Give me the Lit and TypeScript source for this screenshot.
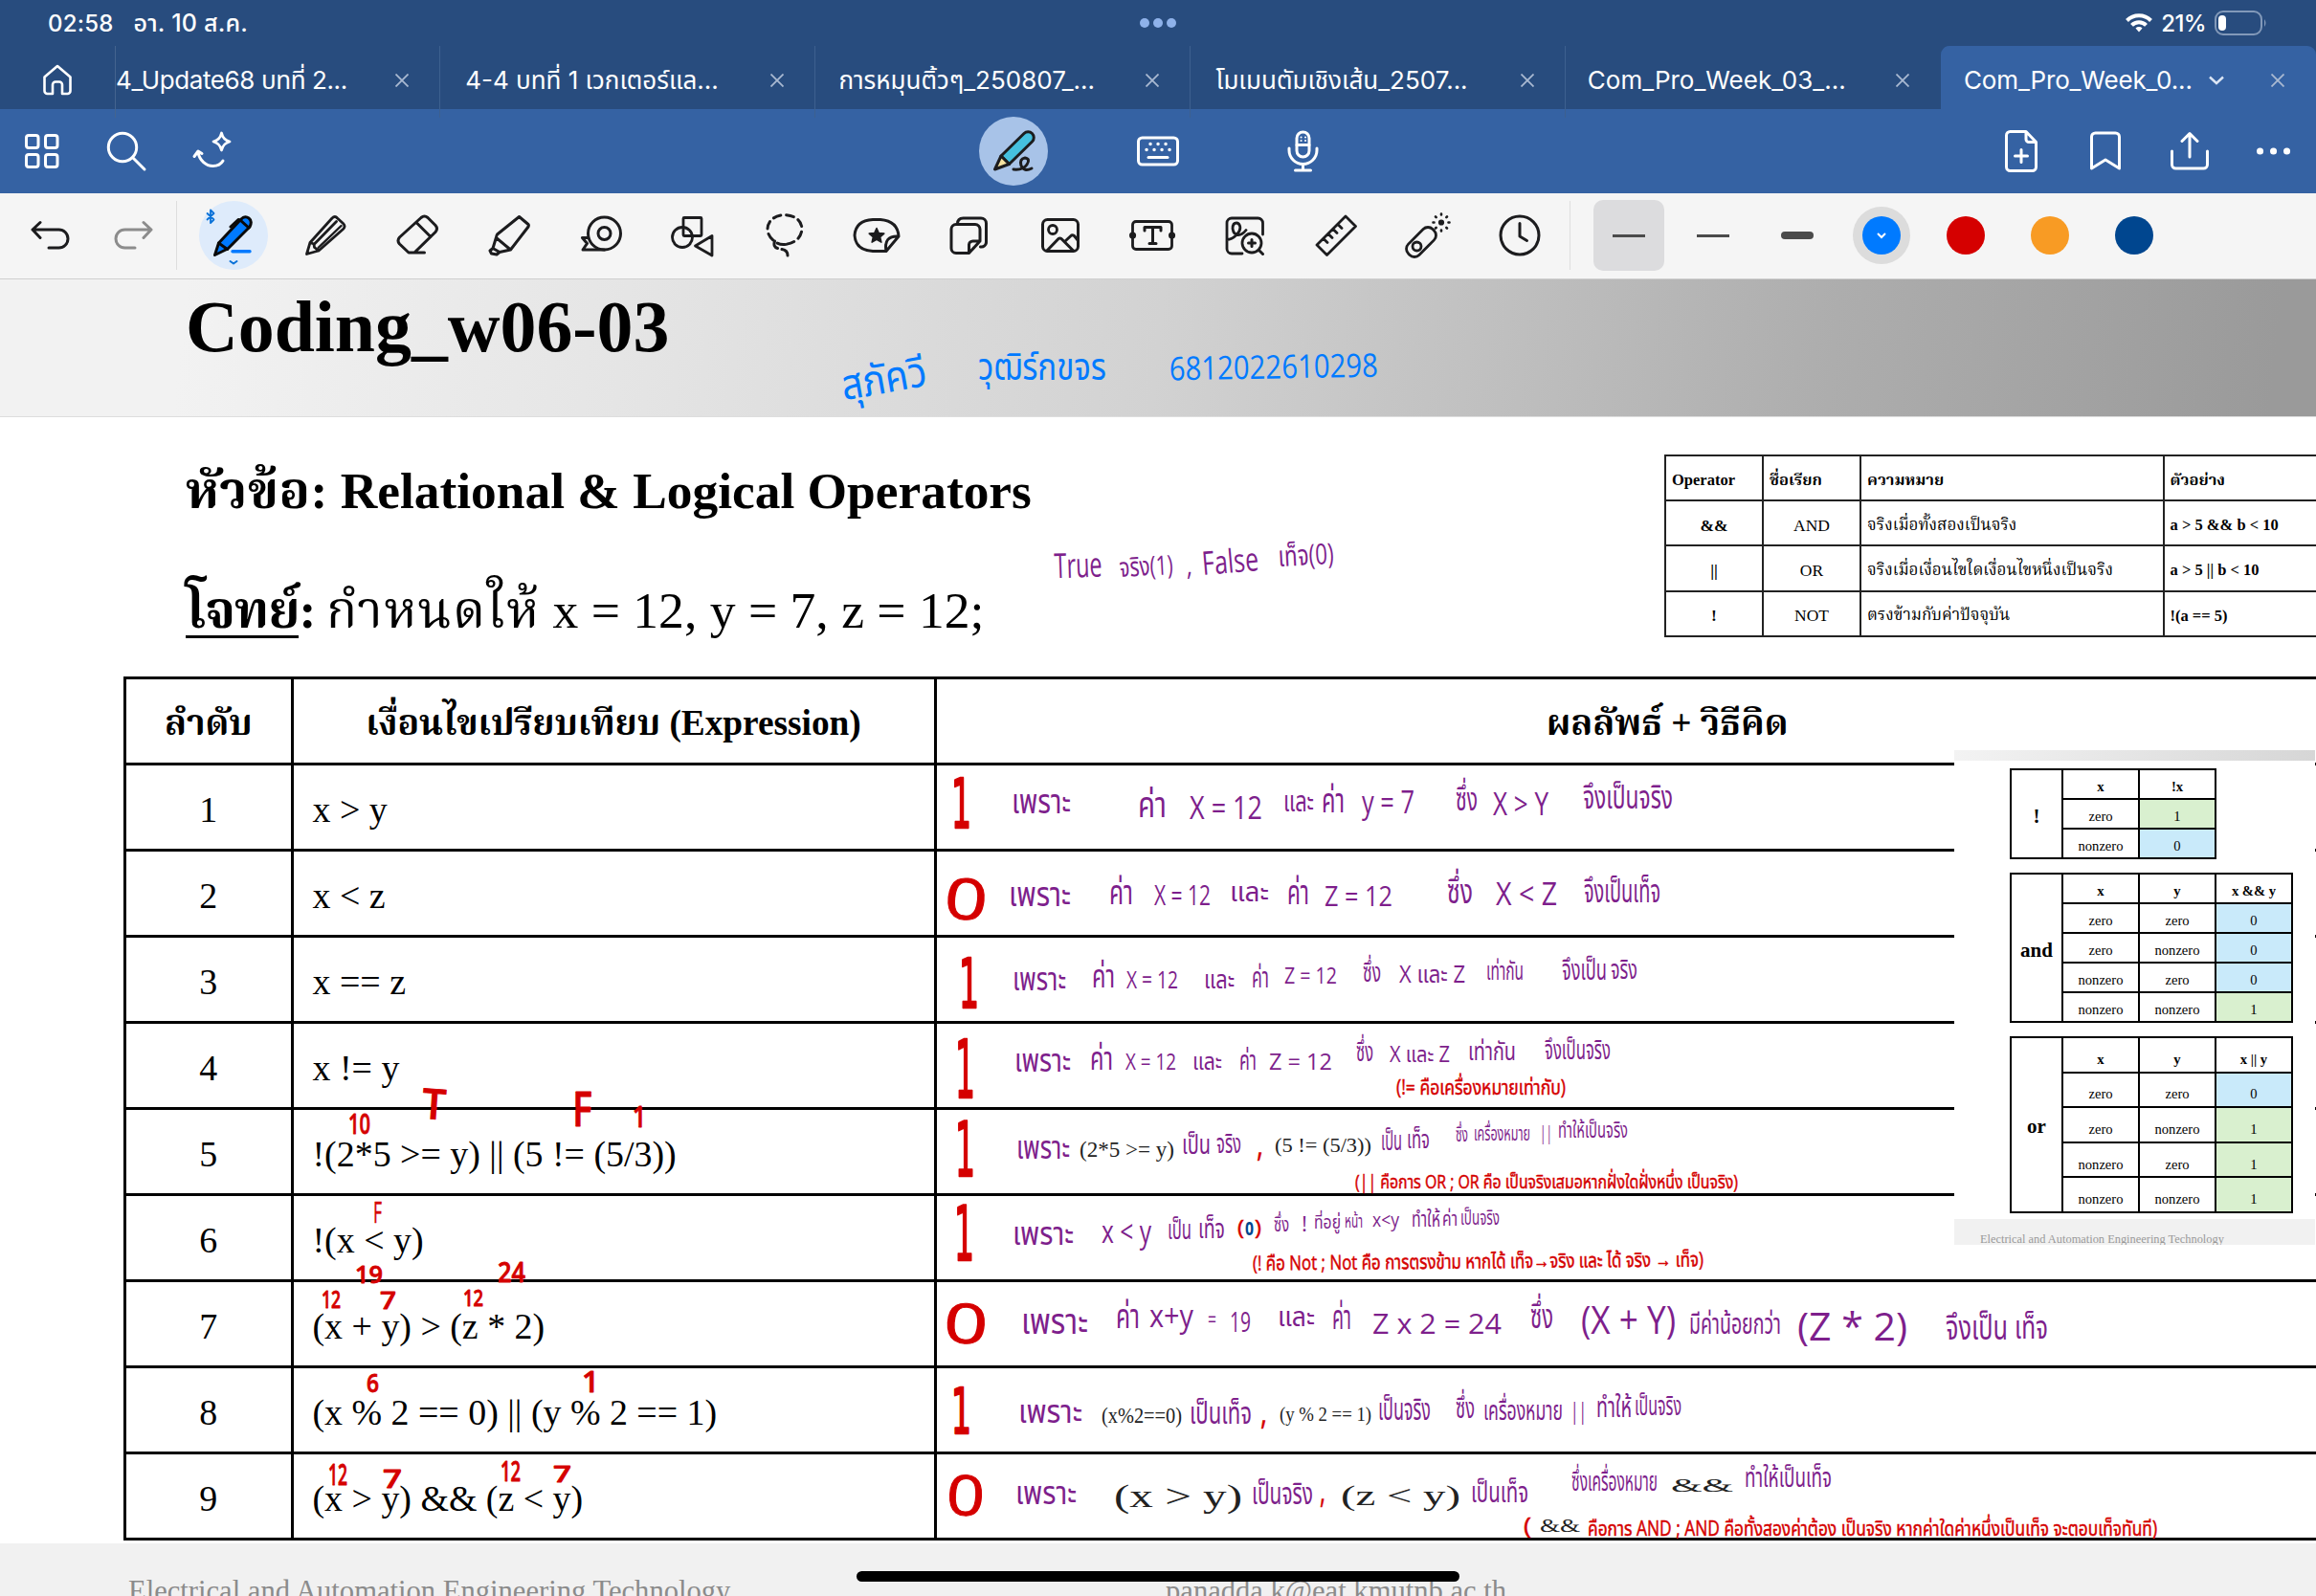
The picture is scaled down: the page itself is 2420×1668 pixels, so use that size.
import { LitElement, html, css, svg, nothing } from "lit";
import { customElement, property } from "lit/decorators.js";

const stroke = (d: string, w = 3) => svg`<path d=${d} stroke-width=${w}></path>`;

const ICONS: Record<string, unknown> = {
  home: svg`<path d="M16.5 26.5 30 15l13.5 11.5V41a3 3 0 0 1-3 3H35V34.500a3 3 0 0 0-3-3h-4a3 3 0 0 0-3 3V44h-5.500a3 3 0 0 1-3-3Z" stroke-width="2.600"></path>`,
  grid: svg`<g stroke-width="3"><rect x="13.500" y="13.500" width="12.500" height="13" rx="2.500"></rect><rect x="33.500" y="13.500" width="12.500" height="13" rx="2.500"></rect><rect x="13.500" y="33.500" width="12.500" height="13" rx="2.500"></rect><rect x="33.500" y="33.500" width="12.500" height="13" rx="2.500"></rect></g>`,
  search: svg`<circle cx="26" cy="26" r="14.700" stroke-width="3"></circle>${stroke("M37 37 49 49")}`,
  magic: svg`<path d="M39.500 11q1.500 7 8.500 9-7 2-8.500 9-1.500-7-8.500-9 7-2 8.500-9Z" stroke-width="2.800"></path>${stroke("M11 35.500l4-5.500 4 2.500M15 31C16.500 40 23.500 45.500 30.500 45.500c5 0 8.500-2 10.500-5.500")}`,
  write: svg`<path d="M17 35 41 11.500a6 6 0 0 1 8.500 8.500L25.500 43.500Z" fill="#45c0df" stroke="#1c1c1e" stroke-width="3"></path><path d="M17 35 10.500 49 25.500 43.500Z" fill="#f6e3a1" stroke="#1c1c1e" stroke-width="3"></path><path d="M30 49q10 1 14-5t-2-7q-6 1-4 8 3 7 11 3" stroke="#1c1c1e" stroke-width="3"></path>`,
  keyboard: svg`<rect x="9.500" y="16" width="41" height="28" rx="4" stroke-width="3"></rect>${stroke("M20 36.500h20", 3)}<path d="M22 22.500h.1M30 22.500h.1M38 22.500h.1M18 28.500h.1M26 28.500h.1M34 28.500h.1M42 28.500h.1" stroke-width="3.400"></path>`,
  mic: svg`<rect x="24" y="10" width="13" height="26" rx="6.500" stroke-width="3"></rect>${stroke("M16 27v2a14.500 14.500 0 0 0 29 0v-2M30.500 43.500v6M22.500 50h16M24 23.500h13")}<path d="M28.500 15.500h.1M33 15.500h.1M28.500 19h.1M33 19h.1" stroke-width="2"></path>`,
  addpage: svg`<path d="M35 9.500H18.500a4 4 0 0 0-4 4v33a4 4 0 0 0 4 4h23a4 4 0 0 0 4-4V20.500ZM35 9.500v8a3 3 0 0 0 3 3h7.500M30 28.500v13M23.500 35h13" stroke-width="3"></path>`,
  bookmark: svg`<path d="M15.500 48V15a4 4 0 0 1 4-4h21a4 4 0 0 1 4 4v33L30 39Z" stroke-width="3"></path>`,
  share: svg`<path d="M30 36V12M22 19.500l8-8 8 8M11.500 30v14a4 4 0 0 0 4 4h29a4 4 0 0 0 4-4V30" stroke-width="3"></path>`,
  more: svg`<path d="M15.500 30h.1M29.500 30h.1M43.500 30h.1" stroke-width="7"></path>`,
  undo: svg`<path d="M20 16.500 12 24l8 8.500M12 24h27.500a9.500 9.500 0 0 1 0 19H29" stroke-width="3"></path>`,
  redo: svg`<path d="M40 16.500 48 24l-8 8.500M48 24H20.500a9.500 9.500 0 0 0 0 19H31" stroke-width="3" stroke="#8c8c8c"></path>`,
  pen: svg`<circle cx="30" cy="30" r="36" fill="#deebfb" stroke="none"></circle>
    <path d="M10.500 50.500 14.500 38 38 13q4-4 8-1t1 9L24 44Z" fill="#007aff" stroke="#0a0a0a" stroke-width="3"></path>
    <path d="M14.500 38l9 6.500M37 14l9 8M27 21l8-7.500 3 1" stroke="#0a0a0a" stroke-width="3"></path>
    <path d="M29 46.800h18" stroke="#007aff" stroke-width="3.400"></path><path d="M26.500 57l3.500 2.500 3.500-2.500" stroke="#0a72d8" stroke-width="2"></path>
    <path d="M2.500 7l7 6.500L6 17V3.500L9.500 7l-7 6.500" stroke="#0a72d8" stroke-width="1.800"></path>`,
  pencil: svg`<path d="M10.500 49.500 14 37.500 37 12q3-3 5.500 0l6 5.500q3 3 0 6L23 46ZM14 37.500l4 1.500.5 3.500 4.500 3.500M19 38.500 41.500 15.500" stroke-width="2.800"></path><path d="M22.500 43 46.500 20" stroke-width="2.400"></path>`,
  eraser: svg`<path d="M37.500 48H21L11.500 39q-3-3.500 0-7L34 11.500q3.500-3 7 0l8 8q3 3.500 0 7L27 48M29 16.500l15 15" stroke-width="3"></path>`,
  marker: svg`<path d="M40.500 10.500 50 18.500q.8 1 0 2.500L31.500 45 16.500 32.500q0-2 1-3.500ZM16.500 32 13 43.500l-3 2.500 1.500 3 5.500 1 3-2.500L31.500 45M13 43.500l7 4" stroke-width="3"></path>`,
  tape: svg`<circle cx="33.500" cy="28" r="17" stroke-width="3"></circle><circle cx="33.500" cy="28" r="6.500" stroke-width="3"></circle><path d="M33.500 45H11l4.500-6.500L10.500 32.500h6" stroke-width="3"></path>`,
  shapes: svg`<rect x="20" y="11.500" width="19" height="19" rx="1" stroke-width="2.800"></rect><circle cx="19" cy="32" r="10.500" stroke-width="2.800"></circle><path d="M32.500 41 50 30.500v20.500Z" stroke-width="2.800"></path>`,
  lasso: svg`<path d="M30 39.500q-4 .5-8-1.500-10-6-10-15 1-13 18-14.500 17 1.500 18 14.500-1 14-18 16.500" stroke-width="3" stroke-dasharray="8 5.500"></path><path d="M19.500 36q-2 6 3 7.500M27 44.500q6 1 6 6.500" stroke-width="3"></path>`,
  sticker: svg`<path d="M40 46.500H26q-18-1-19-16.500 1-15.500 19-16.500h8Q52 15 53 31ZM53 31Q37 30 40 46.500" stroke-width="3"></path><path d="M30 22.500l2.300 5 5.500.6-4.100 3.700 1.200 5.400-4.900-2.800-4.900 2.800 1.200-5.400-4.100-3.700 5.500-.6Z" fill="#1c1c1e" stroke-width="1.500"></path>`,
  pages: svg`<path d="M29 48.500H17a5 5 0 0 1-5-5v-20a5 5 0 0 1 5-5h20a5 5 0 0 1 5 5V36L30.500 48.500V40a4 4 0 0 1 4-4H42M18.500 18q0-6 6-6H43a5.500 5.500 0 0 1 5.500 5.500V37a5 5 0 0 1-6 5" stroke-width="3"></path>`,
  image: svg`<rect x="11.500" y="13.500" width="37" height="33" rx="5" stroke-width="3"></rect><circle cx="22" cy="24" r="4.500" stroke-width="2.800"></circle><path d="M16 46l12-12.500q1.500-1 3 0L43.500 46M34.500 36.500l7-6.500q1.500-.5 3 .5l4 5" stroke-width="3"></path>`,
  textbox: svg`<rect x="9.500" y="15.500" width="41" height="29" rx="3.500" stroke-width="2.800"></rect><path d="M9.500 30h.1M50.500 30h.1" stroke-width="7"></path><path d="M22 25v-3.500h17V25M30.500 21.500v17M27 38.500h7" stroke-width="3"></path>`,
  aizoom: svg`<path d="M49.500 29V17a5 5 0 0 0-5-5H17a5 5 0 0 0-5 5v27a5 5 0 0 0 5 5h11M12 34.500q5 0 10-5 5-5 3.500-9.500-1-3-3.500-3-4 0-4 6 1 6.500 6 6.500 4 0 8-5" stroke-width="2.800"></path><circle cx="38" cy="38" r="10" fill="#f5f5f5" stroke-width="2.800"></circle><path d="M45.500 45.500l4 4M34.500 38h7M38 34.500v7" stroke-width="3"></path>`,
  ruler: svg`<path d="M10 40 40 10 50.500 20.500 20.500 50.500ZM17 33.500l4 4M22 28.500l4 4M27 23.500l4 4M32 18.500l4 4" stroke-width="2.800"></path>`,
  laser: svg`<rect x="5" y="29" width="36" height="16" rx="7" transform="rotate(-45 23 37)" stroke-width="2.800"></rect><circle cx="18.500" cy="41.500" r="4.500" stroke-width="2.800"></circle><path d="M44 7.500v1M44 24.500v1M35.500 16.500h1M51.500 16.500h1M38 10.500l.7.700M49.300 21.800l.7.700M38 22.500l.7-.7M49.300 11.200l.7-.7" stroke-width="2.600"></path><circle cx="44" cy="16.500" r="2.300" fill="#1c1c1e" stroke-width="1.600"></circle>`,
  clock: svg`<circle cx="30" cy="30" r="20" stroke-width="3"></circle>${stroke("M30 17.500V31l7.500 4.500")}`,
};

@customElement("ink-icon")
class InkIcon extends LitElement {
  @property() name = "";
  static styles = css`
    :host { display: block; width: 72px; height: 72px; flex: none; }
    svg { display: block; width: 72px; height: 72px; overflow: visible; fill: none; stroke: currentColor; stroke-linecap: round; stroke-linejoin: round; }
  `;
  render() {
    return html`<svg viewBox="-6 -6 72 72">${ICONS[this.name] ?? nothing}</svg>`;
  }
}

const TABS = ["4_Update68 บทที่ 2...", "4-4 บทที่ 1 เวกเตอร์แล...", "การหมุนติ้วๆ_250807_...", "โมเมนตัมเชิงเส้น_2507...", "Com_Pro_Week_03_...", "Com_Pro_Week_0..."];
const TOOLS = ["pen", "pencil", "eraser", "marker", "tape", "shapes", "lasso", "sticker", "pages", "image", "textbox", "aizoom", "ruler", "laser", "clock"];

@customElement("app-chrome")
class AppChrome extends LitElement {
  static styles = css`
    :host { display: block; font-family: Inter, "Noto Sans Thai", "Noto Sans", sans-serif; color: #fff; }
    .status { height: 48px; background: #284c7e; display: grid; grid-template-columns: 1fr auto 1fr; align-items: center; padding: 0 51px 0 50px; font-size: 24px; font-weight: 500; }
    .when { display: flex; align-items: center; gap: 21px; letter-spacing: 0.2px; }
    .when span:last-child { font-size: 25px; line-height: 28px; }
    .dots { display: flex; gap: 4px; padding-left: 1px; }
    .dots i { width: 10px; height: 10px; border-radius: 5px; background: #8fb2ea; }
    .power { display: flex; justify-content: flex-end; align-items: center; gap: 9px; letter-spacing: -0.6px; }
    .power svg { display: block; }
    .tabs { height: 66px; background: #284c7e; display: grid; grid-template-columns: 120px 340px 392px 391.500px 392px 392.500px 392px; }
    .home { display: grid; place-items: center; padding-bottom: 3px; }
    .tab { display: grid; grid-template-columns: 1fr 78px; align-items: center; border-right: 1px solid #3d608f; font-size: 26px; box-sizing: border-box; white-space: nowrap; padding-bottom: 4px; }
    .tab:nth-child(2) { border-left: 1px solid #44648f; }
    .tab:nth-child(6) { border-right: 0; grid-template-columns: 1fr 80px; }
    .label { text-align: center; overflow: visible; letter-spacing: 0; padding-left: 4px; line-height: 40px; }
    .tab:nth-child(2) .label { text-align: left; padding-left: 0; letter-spacing: -0.4px; }
    .tab.on { background: #3562a3; border-radius: 9px 9px 0 0; border: 0; grid-template-columns: 264px 48px 80px; }
    .tab.on .label { padding-left: 24px; text-align: left; letter-spacing: -0.15px; }
    .x { justify-self: center; stroke: #a9b9d1; stroke-width: 1.800; fill: none; }
    .v { justify-self: center; stroke: #dbe5f4; stroke-width: 2.400; fill: none; }
    .nav { height: 88px; background: #3562a3; display: grid; grid-template-columns: 1fr auto 1fr; align-items: center; }
    .left { display: flex; gap: 16px; padding-left: 8px; }
    .left ink-icon:nth-child(3) { margin-left: 2px; }
    .mid { display: flex; gap: 79px; }
    .disc { background: #a8c3e8; border-radius: 50%; }
    .right { display: flex; gap: 16px; justify-content: flex-end; padding-right: 8px; }
    .tools { height: 89.500px; box-sizing: border-box; background: #f5f5f5; color: #1c1c1e; display: flex; align-items: center; border-bottom: 1.500px solid #cfcfcf; padding-left: 16px; }
    .undo { display: flex; gap: 16px; width: 168px; height: 72px; border-right: 1.500px solid #dedede; }
    .set { display: flex; gap: 24px; padding-left: 23px; width: 1432px; height: 72px; box-sizing: content-box; border-right: 1.500px solid #dedede; }
    .opts { display: flex; padding-left: 17px; }
    .opt { width: 88px; height: 74px; display: grid; place-items: center; }
    .pick { width: 74px; height: 74px; border-radius: 10px; background: #dcdcde; display: grid; place-items: center; }
    .line { width: 34px; height: 2.500px; background: #4b4b4b; }
    .line.bold { height: 8px; border-radius: 4px; }
    .swatch { width: 40px; height: 40px; border-radius: 50%; display: grid; place-items: center; }
    .ring { width: 60px; height: 60px; border-radius: 50%; background: #dcdcdc; display: grid; place-items: center; }
    .blue { background: #007aff; } .red { background: #d50000; } .orange { background: #f89b24; } .navy { background: #00468f; }
  `;
  render() {
    const x = html`<svg class="x" width="14" height="14" viewBox="0 0 14 14"><path d="M.5.5l13 13M13.500.5l-13 13"></path></svg>`;
    return html`
      <div class="status">
        <div class="when"><span>02:58</span><span>อา. 10 ส.ค.</span></div>
        <div class="dots"><i></i><i></i><i></i></div>
        <div class="power">
          <svg width="28" height="20" viewBox="0 0 28 20" fill="none" stroke="#fff" stroke-width="4"><path d="M1.500 7.500a17.500 17.500 0 0 1 25 0M6.500 12.300a10.500 10.500 0 0 1 15 0"></path><path d="M14 19.500l-3.500-4a5 5 0 0 1 7 0Z" fill="#fff" stroke="none"></path></svg>
          <span>21%</span>
          <svg width="55" height="26" viewBox="0 0 55 26" fill="none"><rect x="1" y="1" width="48" height="24" rx="8" stroke="#8299b9" stroke-width="2"></rect><rect x="4" y="5" width="8" height="16" rx="4" fill="#fff"></rect><path d="M52 9q3 4 0 8Z" fill="#8299b9"></path></svg>
        </div>
      </div>
      <div class="tabs">
        <div class="home"><ink-icon name="home"></ink-icon></div>
        ${TABS.map((t, i) => html`<div class="tab ${i === 5 ? "on" : ""}"><span class="label">${t}</span>
          ${i === 5 ? html`<svg class="v" width="16" height="10" viewBox="0 0 16 10"><path d="M1 1.500l7 6.500 7-6.500"></path></svg>` : nothing}${x}</div>`)}
      </div>
      <div class="nav">
        <div class="left">${["grid", "search", "magic"].map((n) => html`<ink-icon name=${n}></ink-icon>`)}</div>
        <div class="mid"><ink-icon class="disc" name="write"></ink-icon><ink-icon name="keyboard"></ink-icon><ink-icon name="mic"></ink-icon></div>
        <div class="right">${["addpage", "bookmark", "share", "more"].map((n) => html`<ink-icon name=${n}></ink-icon>`)}</div>
      </div>
      <div class="tools">
        <div class="undo"><ink-icon name="undo"></ink-icon><ink-icon name="redo"></ink-icon></div>
        <div class="set">${TOOLS.map((n) => html`<ink-icon name=${n}></ink-icon>`)}</div>
        <div class="opts">
          <div class="opt"><div class="pick"><div class="line"></div></div></div>
          <div class="opt"><div class="line"></div></div>
          <div class="opt"><div class="line bold"></div></div>
          <div class="opt"><div class="ring"><div class="swatch blue"><svg width="10" height="7" viewBox="0 0 10 7" fill="none" stroke="#fff" stroke-width="2"><path d="M1 1l4 4 4-4"></path></svg></div></div></div>
          <div class="opt"><div class="swatch red"></div></div>
          <div class="opt"><div class="swatch orange"></div></div>
          <div class="opt"><div class="swatch navy"></div></div>
        </div>
      </div>`;
  }
}

const ROWS = ["x > y", "x < z", "x == z", "x != y", "!(2*5 >= y) || (5 != (5/3))", "!(x < y)", "(x + y) > (z * 2)", "(x % 2 == 0) || (y % 2 == 1)", "(x > y) && (z < y)"];
const OPS = [["&&", "AND", "จริงเมื่อทั้งสองเป็นจริง", "a > 5 && b < 10"], ["||", "OR", "จริงเมื่อเงื่อนไขใดเงื่อนไขหนึ่งเป็นจริง", "a > 5 || b < 10"], ["!", "NOT", "ตรงข้ามกับค่าปัจจุบัน", "!(a == 5)"]];
const TRUTH = [
  { op: "!", kind: "not", head: ["x", "!x"], rows: [["zero", "1"], ["nonzero", "0"]] },
  { op: "and", kind: "and", head: ["x", "y", "x && y"], rows: [["zero", "zero", "0"], ["zero", "nonzero", "0"], ["nonzero", "zero", "0"], ["nonzero", "nonzero", "1"]] },
  { op: "or", kind: "or", head: ["x", "y", "x || y"], rows: [["zero", "zero", "0"], ["zero", "nonzero", "1"], ["nonzero", "zero", "1"], ["nonzero", "nonzero", "1"]] },
];

/* Ink pieces on the free canvas: text, left, right, baseline, size, tilt in degrees */
type Ink = [string, number, number, number, number, number?];
const PURPLE: Ink[] = [
  ["True", 1102, 1152, 603, 36, -2], ["จริง(1)", 1170, 1226, 601, 28, -3], [",", 1240, 1246, 600, 30], ["False", 1257, 1316, 598, 34, -5], ["เท็จ(0)", 1336, 1394, 590, 30, -3],
  ["เพราะ", 1057, 1119, 849, 36], ["ค่า", 1189, 1219, 853, 38], ["X = 12", 1243, 1319, 855, 33], ["และ", 1341, 1373, 847, 30], ["ค่า", 1381, 1405, 848, 36], ["y = 7", 1423, 1478, 849, 32], ["ซึ่ง", 1521, 1544, 846, 34], ["X > Y", 1560, 1618, 851, 33], ["จึงเป็นจริง", 1654, 1748, 844, 34],
  ["เพราะ", 1054, 1119, 946, 36], ["ค่า", 1159, 1184, 944, 36], ["X = 12", 1206, 1265, 945, 29], ["และ", 1285, 1326, 941, 28], ["ค่า", 1345, 1368, 944, 36], ["Z = 12", 1384, 1455, 946, 29], ["ซึ่ง", 1512, 1539, 943, 36], ["X < Z", 1563, 1627, 945, 32], ["จึงเป็นเท็จ", 1655, 1735, 942, 33],
  ["เพราะ", 1058, 1114, 1034, 34], ["ค่า", 1141, 1165, 1031, 33], ["X = 12", 1177, 1231, 1032, 25], ["และ", 1258, 1290, 1032, 27], ["ค่า", 1308, 1326, 1031, 31], ["Z = 12", 1342, 1397, 1027, 24], ["ซึ่ง", 1424, 1443, 1025, 28], ["X และ Z", 1462, 1531, 1026, 25], ["เท่ากัน", 1553, 1592, 1023, 26], ["จึงเป็น", 1632, 1679, 1023, 30], ["จริง", 1683, 1711, 1022, 28],
  ["เพราะ", 1060, 1119, 1119, 34], ["ค่า", 1139, 1163, 1117, 33], ["X = 12", 1176, 1229, 1117, 23], ["และ", 1246, 1277, 1117, 24], ["ค่า", 1295, 1313, 1117, 29], ["Z = 12", 1326, 1392, 1117, 23], ["ซึ่ง", 1417, 1435, 1108, 28], ["X และ Z", 1452, 1515, 1109, 23], ["เท่ากัน", 1534, 1584, 1107, 26], ["จึงเป็นจริง", 1614, 1683, 1106, 28],
  ["เพราะ", 1062, 1118, 1210, 34], ["เป็น", 1235, 1265, 1205, 28], ["จริง", 1271, 1297, 1204, 28], ["เป็น", 1443, 1465, 1201, 28], ["เท็จ", 1470, 1494, 1199, 26], ["ซึ่ง", 1521, 1534, 1192, 21], ["เครื่องหมาย", 1540, 1599, 1191, 21], ["||", 1609, 1622, 1190, 20], ["ทำให้เป็นจริง", 1628, 1701, 1188, 23],
  ["เพราะ", 1058, 1122, 1300, 34], ["x < y", 1151, 1203, 1298, 32], ["เป็น", 1220, 1245, 1294, 28], ["เท็จ", 1252, 1280, 1293, 28], ["ซึ่ง", 1331, 1347, 1286, 21], ["!", 1360, 1366, 1286, 21], ["ที่อยู่", 1373, 1401, 1283, 19], ["หน้า", 1405, 1424, 1282, 19], ["x<y", 1434, 1462, 1281, 20], ["ทำให้", 1475, 1505, 1281, 23], ["ค่า", 1507, 1523, 1280, 22], ["เป็นจริง", 1526, 1567, 1279, 22],
  ["เพราะ", 1067, 1137, 1393, 38], ["ค่า", 1166, 1191, 1387, 36], ["x+y", 1201, 1247, 1386, 32], ["=", 1262, 1271, 1386, 24], ["19", 1285, 1307, 1391, 29], ["และ", 1335, 1374, 1385, 29], ["ค่า", 1392, 1412, 1388, 35], ["Z x 2 = 24", 1434, 1569, 1393, 29], ["ซึ่ง", 1599, 1623, 1387, 36], ["(X + Y)", 1652, 1751, 1393, 40], ["มีค่าน้อยกว่า", 1765, 1861, 1393, 31], ["(Z * 2)", 1878, 1993, 1400, 40], ["จึงเป็น", 2033, 2098, 1399, 36], ["เท็จ", 2105, 2140, 1398, 34],
  ["เพราะ", 1064, 1131, 1486, 34], ["เป็นเท็จ", 1243, 1308, 1487, 32], ["เป็นจริง", 1440, 1495, 1483, 32], ["ซึ่ง", 1521, 1541, 1481, 30], ["เครื่องหมาย", 1550, 1633, 1483, 28], ["||", 1641, 1658, 1482, 23], ["ทำให้", 1668, 1705, 1480, 30], ["เป็นจริง", 1708, 1757, 1478, 28],
  ["เพราะ", 1061, 1125, 1571, 34], ["เป็นจริง", 1308, 1372, 1571, 32], ["เป็นเท็จ", 1537, 1597, 1569, 30], ["ซึ่งเครื่องหมาย", 1642, 1732, 1557, 28], ["ทำให้เป็นเท็จ", 1823, 1914, 1553, 28],
];
const BLUE: Ink[] = [["สุภัควี", 881, 971, 410, 44, -10], ["วุฒิร์กขจร", 1022, 1156, 396, 40], ["6812022610298", 1222, 1440, 395, 34, -1]];
const NOTES: Ink[] = [
  ["(!= คือเครื่องหมายเท่ากับ)", 1459, 1636, 1143, 22], [",", 1313, 1320, 1208, 34],
  ["(|| คือการ OR ; OR คือ เป็นจริงเสมอหากฝั่งใดฝั่งหนึ่ง เป็นจริง)", 1416, 1816, 1241, 20],
  ["(", 1293, 1300, 1290, 22], [")", 1311, 1318, 1290, 22],
  ["(! คือ Not ; Not คือ การตรงข้าม หากได้ เท็จ→จริง และ ได้ จริง → เท็จ)", 1309, 1780, 1325, 21, -0.5],
  [",", 1317, 1324, 1488, 34], [",", 1379, 1385, 1570, 34], ["(", 1592, 1600, 1602, 24],
  ["คือการ AND ; AND คือทั้งสองค่าต้อง เป็นจริง หากค่าใดค่าหนึ่งเป็นเท็จ จะตอบเท็จทันที)", 1659, 2254, 1604, 22],
  ["F", 390, 399, 1277, 31],
];
const MARKS: Ink[] = [
  ["T", 440, 465, 1169, 44, 4], ["F", 598, 619, 1176, 50], ["1", 661, 675, 1177, 30], ["10", 364, 387, 1184, 29], ["19", 371, 400, 1340, 26], ["24", 520, 549, 1339, 28], ["12", 336, 356, 1366, 26], ["7", 397, 414, 1367, 26], ["12", 484, 505, 1364, 23], ["6", 383, 396, 1454, 27], ["1", 608, 626, 1454, 30], ["12", 343, 363, 1551, 30], ["7", 400, 420, 1554, 27], ["12", 523, 544, 1547, 28], ["7", 578, 597, 1548, 24],
];
const ONES: Ink[] = [
  ["1", 994, 1015, 864, 71], ["1", 1002, 1023, 1052, 71], ["1", 998, 1019, 1146, 84], ["1", 998, 1019, 1228, 79], ["1", 997, 1018, 1316, 79], ["1", 994, 1015, 1497, 65],
];
const ZEROS: Ink[] = [["0", 985, 1030, 960, 59, 6], ["0", 985, 1031, 1403, 57, 4], ["0", 988, 1028, 1583, 58, 3]];
const TYPED: Ink[] = [
  ["(2*5 >= y)", 1128, 1227, 1208, 23], ["(5 != (5/3))", 1332, 1433, 1203, 22], ["(x%2==0)", 1151, 1235, 1486, 24], ["(y % 2 == 1)", 1337, 1433, 1484, 22], ["(x > y)", 1164, 1298, 1574, 34], ["(z < y)", 1401, 1526, 1572, 30], ["&&", 1746, 1811, 1558, 18], ["&&", 1609, 1651, 1600, 18],
];

@customElement("note-page")
class NotePage extends LitElement {
  static styles = css`
    :host { display: block; height: 1376.500px; position: relative; overflow: hidden; background: #fff; color: #000; font-family: "Liberation Serif", "Noto Serif Thai", serif; }
    .banner { height: 144.500px; background: linear-gradient(96deg, #f2f2f2 8%, #e5e5e5 27%, #d2d2d2 50%, #adadad 79%, #9a9a9a 98%); padding-left: 194px; box-sizing: border-box; border-bottom: 1px solid #ddd; }
    .banner h1 { margin: 0; padding-top: 6.500px; font-size: 75.800px; line-height: 87px; font-weight: 700; white-space: nowrap; }
    .intro { height: 270.500px; display: flex; justify-content: space-between; box-sizing: border-box; }
    .texts { padding: 39px 0 0 194px; white-space: nowrap; }
    .topic { font-size: 53.400px; line-height: 76px; height: 76px; font-weight: 700; }
    .topic span { letter-spacing: 0.6px; }
    .task { margin-top: 49px; font-size: 53.600px; line-height: 76px; height: 76px; }
    .task b { letter-spacing: -1px; }
    .task b span { border-bottom: 3px solid #000; display: inline-block; line-height: 52px; }
    .task .give { letter-spacing: 1.400px; margin-left: -2px; }
    .ops { margin-top: 39px; width: 681px; height: 191px; display: grid; grid-template-columns: 102px 102px 316.500px 160px; grid-template-rows: repeat(4, 47.200px); border-left: 2px solid #222; border-top: 2px solid #222; box-sizing: border-box; font-size: 16.500px; }
    .ops div { border-right: 2px solid #222; border-bottom: 2px solid #222; box-sizing: border-box; display: flex; align-items: center; padding: 5px 6px 0; white-space: nowrap; }
    .ops .h, .ops .b { font-weight: 700; }
    .ops .c { justify-content: center; font-size: 17.500px; }
    .ops .t { font-size: 17px; }
    .main { margin-left: 129px; display: grid; grid-template-columns: 174.500px 672px 1fr; grid-auto-rows: 90.050px; border-left: 3px solid #000; border-top: 3px solid #000; font-size: 37.900px; }
    .main div { border-right: 3px solid #000; border-bottom: 3px solid #000; box-sizing: border-box; display: flex; align-items: center; padding: 6px 0 0 20px; white-space: nowrap; }
    .main .n { justify-content: center; padding-left: 0; }
    .main .h { justify-content: center; padding: 10px 0 0; font-weight: 700; font-size: 37.300px; }
    .main .res { border-right: 0; }
    .main .h.res { padding-left: 86px; }
    .foot { margin-top: 3px; height: 55px; background: #f1f1f1; display: flex; color: #8b8b8b; font-size: 30.600px; line-height: 34px; padding-top: 33px; box-sizing: border-box; overflow: hidden; white-space: nowrap; }
    .foot span:first-child { width: 1084px; padding-left: 134px; box-sizing: content-box; }
    .inset { position: absolute; left: 2042px; top: 492.500px; width: 377px; height: 517px; background: #fff; overflow: hidden; display: flex; flex-direction: column; }
    .strip { height: 11px; flex: none; background: linear-gradient(90deg, #f3f3f3, #d6d6d6); }
    .truth { margin-left: 58px; border: 1px solid #000; outline: 1px solid #000; outline-offset: -1px; display: grid; font-size: 14.600px; box-sizing: border-box; flex: none; }
    .truth div { border: 1px solid #000; display: flex; align-items: center; justify-content: center; padding-top: 5px; box-sizing: border-box; white-space: nowrap; line-height: 15px; }
    .truth .op { font-size: 21px; font-weight: 700; grid-row: 1 / -1; padding: 4px 0 0; line-height: 24px; }
    .truth .hd { font-weight: 700; }
    .truth .g { background: #d9f0cf; } .truth .s { background: #c9eafa; }
    .not { width: 216px; height: 95px; margin-top: 8px; grid-template-columns: 54px 80px 80px; grid-template-rows: repeat(3, 1fr); }
    .and { width: 296px; height: 157px; margin-top: 14px; grid-template-columns: 54px 80px 80px 80px; grid-template-rows: repeat(5, 1fr); }
    .or { width: 296px; height: 185px; margin-top: 14px; grid-template-columns: 54px 80px 80px 80px; grid-template-rows: repeat(5, 1fr); }
    .or div:not(.op) { padding-top: 10px; }
    .cap { margin-top: 6px; flex: 1; background: #f1f1f1; color: #999; font-size: 12.400px; line-height: 14px; padding: 14px 0 0 27px; white-space: nowrap; }
    .ink { position: absolute; left: 0; top: 0; width: 2420px; height: 1376.500px; font-family: "Open Sans", "Noto Sans Thai", sans-serif; }
    .purple { fill: #7e1f8c; } .blue { fill: #007aff; } .red { fill: #d50000; }
    .notes { stroke: #d50000; stroke-width: .5; }
    .marks { font-weight: 600; font-family: "Open Sans", sans-serif; stroke: #d50000; stroke-width: .8; stroke-linejoin: round; }
    .ones { font-family: "DejaVu Sans", sans-serif; stroke: #d50000; stroke-width: 2.500; stroke-linejoin: round; }
    .zeros { font-family: "Open Sans", sans-serif; stroke: #d50000; stroke-width: 1; }
    .typed { fill: #222; font-family: "Liberation Serif", serif; }
    .homebar { position: absolute; left: 895px; top: 1350.500px; width: 630px; height: 11px; border-radius: 6px; background: #000; }
  `;
  ink(list: Ink[], cls: string) {
    return svg`<g class=${cls}>${list.map(([t, a, b, y, s, r]) => svg`<text x=${a} y=${y} font-size=${s} textLength=${b - a} lengthAdjust="spacingAndGlyphs" transform=${r ? `rotate(${r} ${(a + b) / 2} ${y})` : nothing}>${t}</text>`)}</g>`;
  }
  render() {
    return html`
      <div class="banner"><h1>Coding_w06-03</h1></div>
      <div class="intro">
        <div class="texts">
          <div class="topic"><span>หัวข้อ</span>: Relational &amp; Logical Operators</div>
          <div class="task"><b><span>โจทย์</span>:</b> <span class="give">กำหนดให้</span> x = 12, y = 7, z = 12;</div>
        </div>
        <div class="ops">
          ${["Operator", "ชื่อเรียก", "ความหมาย", "ตัวอย่าง"].map((h) => html`<div class="h">${h}</div>`)}
          ${OPS.map((r) => html`<div class="c b">${r[0]}</div><div class="c">${r[1]}</div><div class="t">${r[2]}</div><div class="b">${r[3]}</div>`)}
        </div>
      </div>
      <div class="main">
        <div class="h">ลำดับ</div><div class="h">เงื่อนไขเปรียบเทียบ (Expression)</div><div class="h res">ผลลัพธ์ + วิธีคิด</div>
        ${ROWS.map((e, i) => html`<div class="n">${i + 1}</div><div>${e}</div><div class="res"></div>`)}
      </div>
      <div class="foot"><span>Electrical and Automation Engineering Technology</span><span>panadda.k@eat.kmutnb.ac.th</span></div>
      <div class="inset">
        <div class="strip"></div>
        ${TRUTH.map((t) => html`<div class="truth ${t.kind}"><div class="op">${t.op}</div>${t.head.map((h) => html`<div class="hd">${h}</div>`)}
          ${t.rows.map((r) => r.map((c) => html`<div class=${c === "1" ? "g" : c === "0" ? "s" : ""}>${c}</div>`))}</div>`)}
        <div class="cap">Electrical and Automation Engineering Technology</div>
      </div>
      <svg class="ink" viewBox="0 291.500 2420 1376.500">
        ${this.ink(BLUE, "blue")}${this.ink(PURPLE, "purple")}${this.ink(NOTES, "red notes")}${this.ink(MARKS, "red marks")}${this.ink(ONES, "red ones")}${this.ink(ZEROS, "red zeros")}${this.ink(TYPED, "typed")}
        <text x="1301" y="1290" font-size="19" textLength="9" lengthAdjust="spacingAndGlyphs" fill="#00468f" font-weight="700">0</text>
      </svg>
      <div class="homebar"></div>`;
  }
}

@customElement("app-root")
class AppRoot extends LitElement {
  static styles = css`:host { display: block; width: 2420px; height: 1668px; overflow: hidden; }`;
  render() {
    return html`<app-chrome></app-chrome><note-page></note-page>`;
  }
}
